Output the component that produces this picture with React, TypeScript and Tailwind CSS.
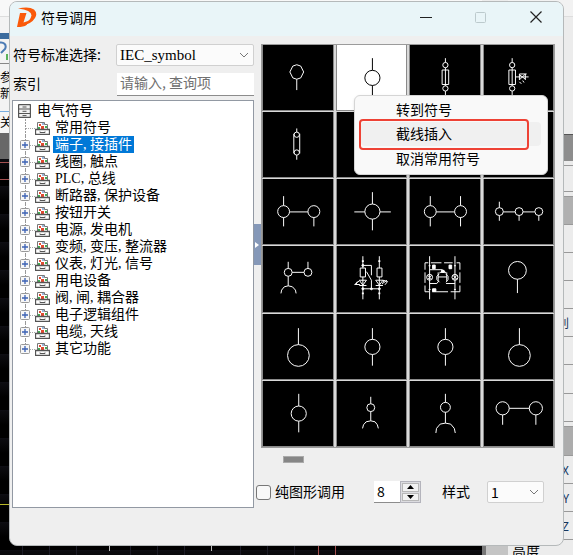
import { FC, ReactNode, useState } from "react";

interface TreeItem {
    label: string;
    expandable: boolean;
}

const treeItems: TreeItem[] = [
    { label: "常用符号", expandable: false },
    { label: "端子, 接插件", expandable: true },
    { label: "线圈, 触点", expandable: true },
    { label: "PLC, 总线", expandable: true },
    { label: "断路器, 保护设备", expandable: true },
    { label: "按钮开关", expandable: true },
    { label: "电源, 发电机", expandable: true },
    { label: "变频, 变压, 整流器", expandable: true },
    { label: "仪表, 灯光, 信号", expandable: true },
    { label: "用电设备", expandable: true },
    { label: "阀, 闸, 耦合器", expandable: true },
    { label: "电子逻辑组件", expandable: true },
    { label: "电缆, 天线", expandable: true },
    { label: "其它功能", expandable: true },
];

// Schematic symbols, drawn in a 212 x 198 box
const throughTerminal = (
    <>
        <circle cx="106" cy="100" r="23" />
        <path d="M106 43V77M106 123V157" />
    </>
);

const bigTerminal = (
    <>
        <circle cx="106" cy="126" r="33" />
        <path d="M106 43V93" />
    </>
);

const symbols: ReactNode[] = [
    <>
        <path d="M89 64L101 60L113 64L122 82L113 100L101 104L89 100L80 82Z" />
        <path d="M101 104V137" />
    </>,
    <>
        <circle cx="106" cy="100" r="23" />
        <path d="M106 40V77M106 123V166" />
    </>,
    <>
        <circle cx="106" cy="61" r="8" />
        <circle cx="106" cy="132" r="8" />
        <path d="M106 40V53M106 69V124M106 140V160M96 76H116V120H96Z" />
    </>,
    <>
        <circle cx="84" cy="61" r="8" />
        <circle cx="84" cy="132" r="8" />
        <path d="M84 40V53M84 69V124M84 140V160M74 76H94V120H74ZM94 97H134M106 88V106M124 88V106M106 106L124 88M106 90L124 104M106 88H128M106 112L112 118M116 108L120 114" />
    </>,
    <>
        <circle cx="101" cy="69" r="8" />
        <circle cx="101" cy="123" r="8" />
        <path d="M101 50V61M101 131V145M92 66V126M110 66V126" />
    </>,
    null,
    null,
    null,
    <>
        <circle cx="61" cy="99" r="18" />
        <circle cx="153" cy="99" r="18" />
        <path d="M79 100H135M61 52V81M61 117V144M153 117V144" />
    </>,
    <>
        <circle cx="106" cy="99" r="23" />
        <path d="M106 40V76M106 122V156M51 100H83M129 100H162" />
    </>,
    <>
        <circle cx="60" cy="99" r="18" />
        <circle cx="152" cy="99" r="18" />
        <path d="M78 100H134M60 52V81M60 117V144M152 52V81M152 117V144" />
    </>,
    <>
        <circle cx="45" cy="99" r="12" />
        <circle cx="105" cy="99" r="12" />
        <circle cx="165" cy="99" r="12" />
        <path d="M57 100H93M117 100H153M45 69V87M45 111V127M105 111V127M165 111V127" />
    </>,
    <>
        <circle cx="75" cy="80" r="12" />
        <circle cx="135" cy="80" r="12" />
        <path d="M87 80H123M75 48V68M135 48V68M75 92V121M53 144L55 134L63 124L75 121L88 124L97 134L99 144" />
    </>,
    <>
        <path d="M77 31V67M127 31V67M69 67H85V94H69ZM120 67H135V94H120ZM77 94V162M127 94V162M77 59H103V89M88 78L103 104V130M77 130H127" />
        <path d="M66 104H88L77 119ZM66 120H88M116 104H138L127 119ZM116 120H138M66 106L52 117H68M60 108L56 118M138 104L152 108L144 118M142 104L136 116M150 104L140 112" />
        <path d="M74 46H80M124 46H130M74 144H80M124 144H130" strokeWidth="5" />
        <g fill="currentColor">
            <circle cx="77" cy="59" r="3" />
            <circle cx="77" cy="130" r="3" />
            <circle cx="103" cy="130" r="3" />
            <circle cx="127" cy="130" r="3" />
        </g>
    </>,
    <>
        <path d="M58 31V162M135 31V162M44 72V51H54M62 51H94M102 51H128M140 51H150V72M44 80V112M44 120V139H56M66 139H114M122 139H150V120M150 80V112" />
        <path d="M58 72H96L106 80M135 114H108M58 114H80L86 106M84 80V106M110 80V106M84 94H110M88 84L80 92V102L88 110M106 84L114 92V102L108 110M88 80H108" />
        <circle cx="58" cy="95" r="9" />
        <circle cx="135" cy="95" r="9" />
        <path d="M52 89L64 101M64 89L52 101M129 89L141 101M141 89L129 101M55 60H61M132 60H138M55 132H61M132 132H138" />
        <path d="M67 58H75V69H67ZM117 58H125V69H117ZM67 130H77V138H67ZM94 74H102V80H94Z" fill="currentColor" />
    </>,
    <>
        <circle cx="100" cy="74" r="27" />
        <path d="M100 101V143" />
    </>,
    bigTerminal,
    throughTerminal,
    throughTerminal,
    bigTerminal,
    <>
        <circle cx="107" cy="99" r="23" />
        <path d="M107 39V76M107 122V156" />
    </>,
    <>
        <circle cx="101" cy="81" r="12" />
        <path d="M101 48V69M101 93V121M76 144L79 133L87 124L101 121L114 124L121 133L124 144" />
    </>,
    <>
        <circle cx="106" cy="80" r="15" />
        <path d="M106 39V65M106 95V128M77 158L79 144L90 131L106 128L122 131L133 144L136 158" />
    </>,
    <>
        <circle cx="55" cy="83" r="20" />
        <circle cx="156" cy="83" r="20" />
        <path d="M75 83H136M55 103V133M156 103V133" />
    </>,
];

const Chevron:FC = () => (
    <svg className="pointer-events-none absolute right-[5px] top-[8px] h-[6px] w-[10px]" viewBox="0 0 10 6" fill="none" stroke="#777">
        <path d="M1 1L5 5L9 1" />
    </svg>
);

const CabinetIcon:FC = () => (
    <svg className="h-[14px] w-[13px] shrink-0" viewBox="0 0 13 14" fill="none" stroke="#555">
        <rect x="0.5" y="0.5" width="12" height="13" rx="1" fill="#f2f2f2" strokeWidth="1.4" />
        <path d="M1 5H12M1 9.5H12M4.5 3H8.5M4.5 7.3H8.5M4.5 11.6H8.5" />
    </svg>
);

const FolderIcon:FC = () => (
    <svg className="h-[14px] w-[15px] shrink-0" viewBox="0 0 15 14" fill="none">
        <path d="M2.5 8V1.5H9.5V3.5H12.5V8" fill="#fff" stroke="#777" />
        <path d="M4 3H6V5H4Z" fill="#e04a32" />
        <path d="M6 5H9V8H6Z" fill="#e04a32" />
        <path d="M10 5H12V7H10ZM3 6H5V8H3Z" fill="#45ad55" />
        <path d="M7 2H9V4H7Z" fill="#9ab5d8" />
        <path d="M0.500 8.500H14.500V13.500H0.500Z" fill="#fff" stroke="#555" strokeWidth="1.3" />
        <path d="M5 10.500V11.500H10V10.500" stroke="#555" />
    </svg>
);

// Dotted tree lines with the plus box on top
const Branch:FC<{ expandable: boolean; last: boolean }> = ({ expandable, last }) => (
    <svg className="h-[17px] w-4 shrink-0" viewBox="0 0 16 17" fill="none">
        <path d={ last ? "M6.5 0V9" : "M6.5 0V17" } stroke="#999" strokeDasharray="2 1" />
        <path d="M7 9.5H16" stroke="#aaa" strokeDasharray="1 1" />
        {expandable &&
            <>
                <rect x="1.5" y="4.5" width="9" height="9" rx="1" fill="#f7f7f7" stroke="#999" />
                <path d="M3 9H9M6 6V12" stroke="#3c62b4" strokeWidth="1.3" />
            </>
        }
    </svg>
);

// CAD workspace that shows round the dialog
const Workspace:FC = () => (
    <div className="absolute inset-0 flex bg-[#ececec]" aria-hidden="true">
        <div className="flex flex-1 flex-col overflow-hidden">
            <div className="h-[17px] border-b border-[#ddd] bg-[#f8f8f8]"></div>
            <div className="flex h-[95px] flex-col border-b border-[#78aee0] bg-[#f3f3f3] pt-4">
                <div className="h-[6px] w-9 bg-[#3d6c9e]"></div>
                <svg className="h-6 w-9" viewBox="0 0 36 24" fill="none">
                    <path d="M-2 4C4 2 7 6 5 10L1 14" stroke="#4d7cb5" strokeWidth="2" />
                    <path d="M7 15V21" stroke="#5bb35b" strokeWidth="2" />
                </svg>
                <p className="w-3 border-t border-[#888] pt-[5px] text-xs leading-4 text-black">参新</p>
            </div>
            <p className="h-[21px] bg-[#f5f5f5] text-xs leading-5 text-black">关</p>
            <div className="h-[26px] bg-[#686868]"></div>
            <div className="flex-1 bg-black bg-[repeating-linear-gradient(#0c0c10_0px,#000000_14px,#000000_27px,#1b1b26_28px)]">
                <div className="h-1 border-b border-[#a45050]"></div>
                <div className="h-[17px] border-b border-[#a45050]"></div>
                <div className="h-[325px] border-b border-[#b9b928]"></div>
                <svg className="h-[50px] w-full" fill="none">
                    <path d="M22.5 41V50M49.5 41V50M76.5 41V50M130.5 41V50M157.5 41V50M184.5 41V50M240.5 41V50M267.5 41V50M294.5 41V50" stroke="#1d1d28" />
                    <path d="M109.5 41V46M211.5 41V46" stroke="#bbb" />
                    <path d="M318.5 36V50M335.5 36V50" stroke="#a45050" />
                </svg>
            </div>
        </div>
        <div className="mt-[17px] w-[26px] border-l-4 border-[#777] bg-[#c4c4c4]"></div>
        <div className="flex w-[65px] flex-col overflow-hidden text-xs text-[#17365d] [&>*]:shrink-0">
            <div className="h-[17px] border-b border-[#ddd] bg-[#f2f2f2]"></div>
            <div className="h-[117px]"></div>
            <div className="h-[27px] border-t border-[#555] bg-[#8d8d8d]"></div>
            <div className="mt-1 h-[27px] border-y border-[#999]"></div>
            <div className="mt-1 h-[29px] border-y border-[#999] bg-[#b0b0b0]"></div>
            <div className="h-[28px] border-b border-[#999]"></div>
            <div className="h-[28px] border-b border-[#999]"></div>
            <div className="h-[28px] border-b border-[#999]"></div>
            <div className="h-[28px] border-b border-[#999] pr-1 text-right leading-[28px]">类别</div>
            <div className="h-[28px] border-b border-[#999]"></div>
            <div className="h-[29px] border-b border-[#999]"></div>
            <div className="h-[28px] border-b border-[#999]"></div>
            <div className="mt-1 h-[30px] border-y border-[#999] bg-[#acacac]"></div>
            <div className="h-[28px] border-b border-[#999] pr-1 text-right leading-[28px]">X</div>
            <div className="h-[28px] border-b border-[#999] pr-1 text-right leading-[28px]">Y</div>
            <div className="h-[28px] border-b border-[#999] pr-1 text-right leading-[28px]">Z</div>
            <div className="h-5 pl-1 text-sm leading-5 text-black">高度</div>
        </div>
    </div>
);

const TitleBar:FC = () => (
    <header className="flex h-[34px] items-center bg-[#e9f5f8] pb-1 pl-[7px] pr-[21px]">
        <svg className="mr-1 h-5 w-5" viewBox="0 0 20 20" fill="#fa5a0a">
            <path d="M3 6H9.500L6.500 15.500Q10.500 15 14 12L9.5 18Q7 20 0 20Z" />
            <path d="M1 1.500Q12-1 17 2.500Q21 6.500 18 11Q14.500 16.500 7 18Q13.500 13.500 14.500 8.500Q14.500 3 1 1.500Z" />
        </svg>
        <h1 className="flex-1 text-sm">符号调用</h1>
        <div className="flex items-center gap-[43px]">
            <button aria-label="Minimize">
                <svg className="h-3 w-3" viewBox="0 0 12 12" stroke="#222"><path d="M0 6.5H12" /></svg>
            </button>
            <button aria-label="Maximize" disabled>
                <svg className="h-3 w-3" viewBox="0 0 12 12" fill="none" stroke="#bccacd"><rect x="0.5" y="1.5" width="10" height="10" rx="1" /></svg>
            </button>
            <button aria-label="Close">
                <svg className="h-3 w-3" viewBox="0 0 12 12" stroke="#222" strokeWidth="1.2"><path d="M0.500 0.500L11.500 11.500M11.500 0.500L0.500 11.500" /></svg>
            </button>
        </div>
    </header>
);

const ContextMenu:FC = () => (
    <div className="absolute left-[93px] top-[51px] w-[194px] rounded-md border border-[#d5d5d5] bg-[#f9f9f9] py-[2px] text-sm shadow-sm">
        <button className="block h-[24px] w-full pb-[2px] pl-[41px] text-left">转到符号</button>
        <div className="relative px-[6px]">
            <button className="block h-[24px] w-full rounded bg-[#f0f0f0] pb-[2px] pl-[35px] text-left">截线插入</button>
            <div className="pointer-events-none absolute -top-[3px] left-1 h-[31px] w-[170px] rounded-sm border-2 border-[#ee4235]"></div>
        </div>
        <button className="block h-[26px] w-full pb-[2px] pl-[41px] text-left">取消常用符号</button>
    </div>
);

const App:FC = () => {
    const [selectedItem, setSelectedItem] = useState<number>(1);
    const [selectedSymbol, setSelectedSymbol] = useState<number>(1);
    const [count, setCount] = useState<number>(8);

    return (
        <div className="relative min-h-screen overflow-hidden px-[9px] pt-px font-['Noto_Sans_CJK_SC',sans-serif] text-black">
            <Workspace />

            <main className="relative overflow-hidden rounded-lg border border-[#b5b9ba] bg-[#efefef]">
                <TitleBar />

                <div className="flex pb-[37px] pl-[2px] pr-2 pt-2">
                    {/* Filter and symbol tree */}
                    <section className="flex w-[242px] shrink-0 flex-col">
                        <div className="flex h-[22px] items-center">
                            <label htmlFor="standard" className="w-[104px] pb-[2px] pl-px text-sm">符号标准选择:</label>
                            <div className="relative flex-1">
                                <select id="standard" className="block h-[22px] w-full appearance-none rounded-xs border border-[#d0d0d0] bg-[#fbfbfb] pl-[3px] font-['Liberation_Serif',serif] text-[15px] leading-5">
                                    <option>IEC_symbol</option>
                                </select>
                                <Chevron />
                            </div>
                        </div>
                        <div className="mt-[7px] flex h-[23px] items-center">
                            <label htmlFor="search" className="w-[105px] pb-[4px] pl-px text-sm">索引</label>
                            <input id="search" type="text" placeholder="请输入, 查询项" className="h-[23px] min-w-0 flex-1 border-b border-[#8c8c8c] bg-white px-[3px] pb-1 text-sm placeholder:text-[#707070]" />
                        </div>

                        <div className="mt-1 flex-1 border border-[#9299a3] bg-white pt-px font-['Liberation_Serif','Noto_Sans_CJK_SC',serif] text-sm leading-[17px]">
                            <div className="flex h-[17px] items-center gap-[6px] pl-[5px]">
                                <CabinetIcon />
                                <span>电气符号</span>
                            </div>
                            <ul>
                                {treeItems.map((item, index) => (
                                    <li key={ item.label }>
                                        <button className="flex h-[17px] items-center pl-[6px]" onClick={ () => setSelectedItem(index) }>
                                            <Branch expandable={ item.expandable } last={ index === treeItems.length - 1 } />
                                            <FolderIcon />
                                            <span className={ `ml-[3px] h-[17px] px-[2px] ${index === selectedItem ? "bg-[#0078d7] text-white" : ""}` }>{ item.label }</span>
                                        </button>
                                    </li>
                                ))}
                            </ul>
                        </div>
                    </section>

                    {/* Symbol grid */}
                    <section className="min-w-0 flex-1 pb-[5px]">
                        <div className="flex">
                            <button aria-label="Collapse" className="mt-[180px] flex h-[41px] w-[7px] items-center bg-[#8598b8]">
                                <svg className="h-2 w-[6px]" viewBox="0 0 6 8" fill="#fff"><path d="M1 1L5 4L1 7Z" /></svg>
                            </button>
                            <div className="relative flex-1">
                                <div className="grid h-[404px] grid-cols-4 grid-rows-6 gap-x-[2px] gap-y-px border border-[#9b9b9b] bg-[#d9d9d9]">
                                    {symbols.map((symbol, index) => (
                                        <button
                                            key={ index }
                                            aria-label={ `${index + 1}` }
                                            className={ `min-h-0 border-x border-b border-[#8a8a8a] ${index === selectedSymbol ? "bg-white text-black" : "bg-black text-white"}` }
                                            onClick={ () => setSelectedSymbol(index) }
                                        >
                                            <svg className="h-full w-full" viewBox="0 0 208 198" fill="none" stroke="currentColor" strokeWidth="3">{ symbol }</svg>
                                        </button>
                                    ))}
                                </div>
                                <ContextMenu />
                            </div>
                        </div>

                        <div className="ml-[29px] mt-2 h-[7px] w-[21px] border border-[#aaa] bg-[#868686]"></div>

                        <div className="mt-[18px] flex h-[22px] items-center pl-[2px] text-sm">
                            <input id="shape" type="checkbox" className="h-[15px] w-[15px] appearance-none rounded-[3px] border border-[#777] bg-[#f8f8f8] checked:bg-[#0078d7]" />
                            <label htmlFor="shape" className="ml-1 w-[99px] pb-[2px]">纯图形调用</label>
                            <div className="flex h-[22px] w-[47px]">
                                <input type="text" aria-label="Columns" value={ count } onChange={ (e) => setCount(Number(e.target.value) || 0) } className="min-w-0 flex-1 border-b border-[#8c8c8c] bg-white pb-[2px] pl-[3px]" />
                                <div className="flex w-[21px] flex-col gap-px border border-[#b4b4bc] bg-[#dcdce0] p-px">
                                    <button aria-label="Increase" className="flex flex-1 items-center justify-center border border-[#b8b8b8] bg-[#f2f2f2]" onClick={ () => setCount(count + 1) }>
                                        <svg className="h-1 w-[7px]" viewBox="0 0 7 4"><path d="M0 4L3.500 0L7 4Z" /></svg>
                                    </button>
                                    <button aria-label="Decrease" className="flex flex-1 items-center justify-center border border-[#b8b8b8] bg-[#f2f2f2]" onClick={ () => setCount(count - 1) }>
                                        <svg className="h-1 w-[7px]" viewBox="0 0 7 4"><path d="M0 0L3.500 4L7 0Z" /></svg>
                                    </button>
                                </div>
                            </div>
                            <label htmlFor="style" className="ml-[21px] w-[45px] pb-[2px]">样式</label>
                            <div className="relative w-[57px]">
                                <select id="style" className="block h-[22px] w-full appearance-none rounded-xs border border-[#d0d0d0] bg-[#fbfbfb] pl-[3px] leading-5">
                                    <option>1</option>
                                </select>
                                <Chevron />
                            </div>
                        </div>
                    </section>
                </div>
            </main>
        </div>
    )
}

export default App;
